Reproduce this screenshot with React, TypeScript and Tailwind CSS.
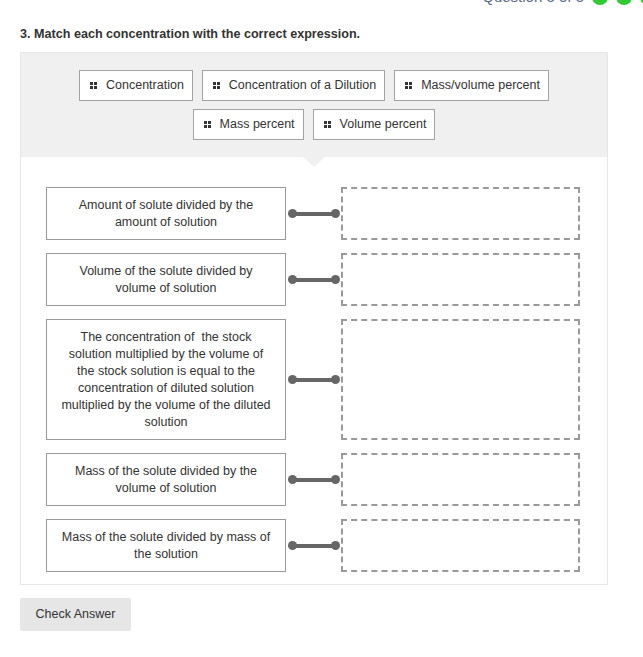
import React from 'react';

const chipsTop = ['Concentration', 'Concentration of a Dilution', 'Mass/volume percent'];
const chipsBottom = ['Mass percent', 'Volume percent'];

const prompts: React.ReactNode[] = [
  <>Amount of solute divided by the<br />amount of solution</>,
  <>Volume of the solute divided by<br />volume of solution</>,
  <>
    The concentration of&nbsp; the stock<br />
    solution multiplied by the volume of<br />
    the stock solution is equal to the<br />
    concentration of diluted solution<br />
    multiplied by the volume of the diluted<br />
    solution
  </>,
  <>Mass of the solute divided by the<br />volume of solution</>,
  <>Mass of the solute divided by mass of<br />the solution</>,
];

function Grip() {
  return (
    <span className="grid grid-cols-2 gap-[1px] w-[7px] h-[7px] shrink-0">
      <span className="bg-[#333] w-[3px] h-[3px]" />
      <span className="bg-[#333] w-[3px] h-[3px]" />
      <span className="bg-[#333] w-[3px] h-[3px]" />
      <span className="bg-[#333] w-[3px] h-[3px]" />
    </span>
  );
}

function Chip({ label }: { label: string }) {
  return (
    <div className="h-[31px] flex items-center gap-[9px] pl-[10px] pr-[8px] bg-white border border-[#a3a3a3] whitespace-nowrap">
      <Grip />
      <span>{label}</span>
    </div>
  );
}

export default function App() {
  return (
    <div className="w-[643px] h-[657px] overflow-hidden bg-white text-[#333] text-[12.5px] font-['Liberation_Sans',Arial,sans-serif]">
      <div className="flex justify-end items-center gap-[8px] h-[16px] -mt-[11px] -mr-[13px]">
        <span className="text-[15px] text-[#5b6b86]">Question 5 of 5</span>
        <span className="w-[16px] h-[16px] rounded-full bg-[#2ecc2e]" />
        <span className="w-[16px] h-[16px] rounded-full bg-[#2ecc2e]" />
        <span className="w-[16px] h-[16px] rounded-full bg-[#2ecc2e]" />
      </div>

      <div className="mt-[19px] ml-[20px] h-[20px] leading-[20px] text-[12.6px] font-bold text-[#333]">
        3. Match each concentration with the correct expression.
      </div>

      <div className="mt-[8px] ml-[20px] w-[588px] border border-[#e6e6e6]">
        <div className="relative bg-[#f0f0f0] pt-[17px] pb-[17px] flex flex-col items-center gap-[8px]">
          <div className="flex gap-[9px]">
            {chipsTop.map((c) => (
              <Chip key={c} label={c} />
            ))}
          </div>
          <div className="flex gap-[9px]">
            {chipsBottom.map((c) => (
              <Chip key={c} label={c} />
            ))}
          </div>
          <div className="absolute left-1/2 -translate-x-1/2 -bottom-[10px] w-0 h-0 border-l-[11px] border-r-[11px] border-t-[10px] border-l-transparent border-r-transparent border-t-[#f0f0f0]" />
        </div>

        <div className="pt-[30px] pb-[12px] pl-[25px] pr-[27px] flex flex-col gap-[13px]">
          {prompts.map((p, i) => (
            <div key={i} className="flex items-stretch">
              <div className="w-[240px] border border-[#999] flex items-center justify-center text-center px-[8px] pt-[9px] pb-[8px] leading-[17px]">
                <div>{p}</div>
              </div>
              <div className="w-[55px] flex items-center pl-[2px] pr-[1px]">
                <span className="w-[9px] h-[9px] rounded-full bg-[#666] shrink-0" />
                <span className="flex-1 h-[4px] bg-[#666] -mx-[1px]" />
                <span className="w-[9px] h-[9px] rounded-full bg-[#666] shrink-0" />
              </div>
              <div className="w-[239px] border-2 border-dashed border-[#9a9a9a]" />
            </div>
          ))}
        </div>
      </div>

      <button className="mt-[13px] ml-[20px] w-[111px] h-[33px] bg-[#e6e6e6] rounded-[2px] text-[#333] text-[12.5px]">
        Check Answer
      </button>
    </div>
  );
}
